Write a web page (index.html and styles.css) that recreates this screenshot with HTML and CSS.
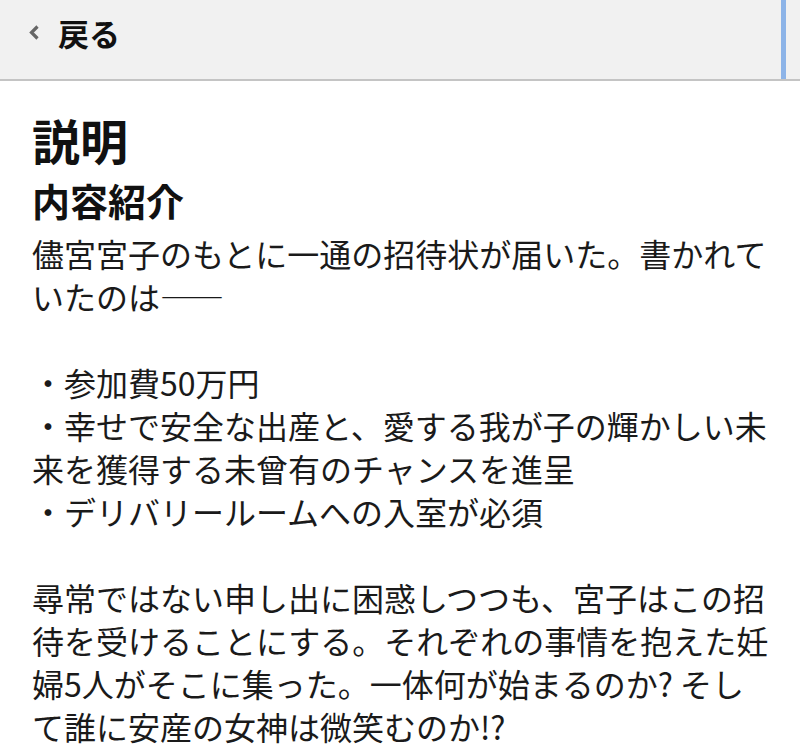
FILE: index.html
```html
<!DOCTYPE html>
<html lang="ja">
<head>
<meta charset="utf-8">
<link rel="stylesheet" href="styles.css">
</head>
<body>
<header class="topbar">
  <div class="back">
    <svg class="chev" width="12" height="15" viewBox="0 0 12 15"><path d="M9.5 1.5 L3.5 7.5 L9.5 13.5" fill="none" stroke="#666" stroke-width="3.2"/></svg>
    <span class="back-label">戻る</span>
  </div>
  <div class="scrollmark"></div>
</header>
<main class="content">
  <h1 class="title">説明</h1>
  <h2 class="subtitle">内容紹介</h2>
  <p class="body">儘宮宮子のもとに一通の招待状が届いた。書かれて<br>いたのは――<br><br>・参加費50万円<br>・幸せで安全な出産と、愛する我が子の輝かしい未<br>来を獲得する未曾有のチャンスを進呈<br>・デリバリールームへの入室が必須<br><br>尋常ではない申し出に困惑しつつも、宮子はこの招<br>待を受けることにする。それぞれの事情を抱えた妊<br>婦5人がそこに集った。一体何が始まるのか? そし<br>て誰に安産の女神は微笑むのか!?</p>
</main>
</body>
</html>
```

FILE: styles.css
```css
html, body {
  margin: 0;
  padding: 0;
  background: #ffffff;
}
body {
  font-family: "Noto Sans CJK JP", "Noto Sans", sans-serif;
  color: #111;
  overflow: hidden;
}
.topbar {
  height: 79px;
  background: #f1f1f1;
  border-bottom: 2px solid #c4c4c4;
  display: flex;
  align-items: stretch;
  justify-content: space-between;
}
.back {
  display: flex;
  align-items: center;
  padding-left: 28px;
  padding-bottom: 15px;
  gap: 18px;
}
.chev {
  display: block;
}
.back-label {
  font-size: 31px;
  font-weight: 700;
  line-height: 1;
  color: #111;
}
.scrollmark {
  width: 5px;
  background: #8db4e8;
  margin-right: 14px;
}
.content {
  padding: 28px 0 0 32px;
}
.title {
  margin: 0;
  font-size: 48px;
  line-height: 60px;
  font-weight: 700;
  color: #111;
}
.subtitle {
  margin: 6px 0 0;
  font-size: 38px;
  line-height: 50px;
  font-weight: 700;
  color: #111;
}
.body {
  margin: 7px 0 0;
  font-size: 32px;
  line-height: 43px;
  white-space: nowrap;
  color: #1a1a1a;
}
```
